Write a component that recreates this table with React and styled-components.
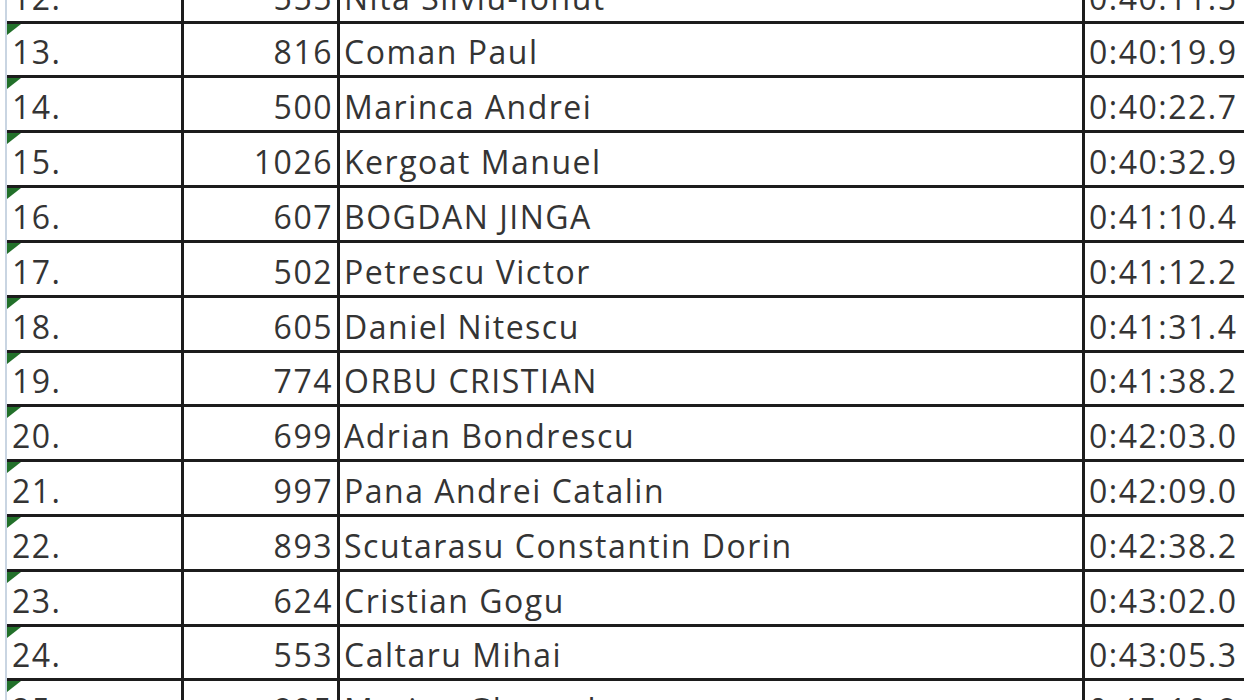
import React from "react";
import styled, { createGlobalStyle } from "styled-components";

const Global = createGlobalStyle`
  html, body { margin: 0; padding: 0; background: #fff; }
  body { width: 1244px; height: 700px; overflow: hidden; }
`;

const Sheet = styled.div`
  width: 1244px;
  height: 700px;
  overflow: hidden;
  background: #fff;
  font-family: "Open Sans", "Liberation Sans", sans-serif;
  color: #343434;
`;

const Gutter = styled.div`
  margin-left: 5px;
  border-left: 2px solid #c9d5e2;
  margin-top: -31.3px;
`;

const Row = styled.div`
  display: grid;
  grid-template-columns: 177px 156px 745px 1fr;
  height: 54.83px;
  box-sizing: border-box;
  border-bottom: 3px solid #1c1c1c;
`;

const Cell = styled.div`
  position: relative;
  box-sizing: border-box;
  display: flex;
  align-items: flex-end;
  justify-content: ${(p) => (p.$right ? "flex-end" : "flex-start")};
  padding: 0 ${(p) => (p.$right ? "4px" : "0")} 7px ${(p) => p.$pl || "4px"};
  border-right: ${(p) => (p.$last ? "none" : "3px solid #1c1c1c")};
  font-size: 32px;
  letter-spacing: 1.5px;
  line-height: 1;
  white-space: nowrap;
`;

const Flag = styled.span`
  position: absolute;
  top: 0;
  left: 0;
  width: 0;
  height: 0;
  border-top: 11px solid #22702a;
  border-right: 14px solid transparent;
`;

const rows = [
  ["12.", "555", "Nita Silviu-Ionut", "0:40:11.5"],
  ["13.", "816", "Coman Paul", "0:40:19.9"],
  ["14.", "500", "Marinca Andrei", "0:40:22.7"],
  ["15.", "1026", "Kergoat Manuel", "0:40:32.9"],
  ["16.", "607", "BOGDAN JINGA", "0:41:10.4"],
  ["17.", "502", "Petrescu Victor", "0:41:12.2"],
  ["18.", "605", "Daniel Nitescu", "0:41:31.4"],
  ["19.", "774", "ORBU CRISTIAN", "0:41:38.2"],
  ["20.", "699", "Adrian Bondrescu", "0:42:03.0"],
  ["21.", "997", "Pana Andrei Catalin", "0:42:09.0"],
  ["22.", "893", "Scutarasu Constantin Dorin", "0:42:38.2"],
  ["23.", "624", "Cristian Gogu", "0:43:02.0"],
  ["24.", "553", "Caltaru Mihai", "0:43:05.3"],
  ["25.", "895", "Marian Gheorghe", "0:45:10.8"],
];

export default function App() {
  return (
    <Sheet>
      <Global />
      <Gutter>
        {rows.map(([pos, bib, name, time]) => (
          <Row key={pos}>
            <Cell $pl="5px">
              <Flag />
              {pos}
            </Cell>
            <Cell $right>{bib}</Cell>
            <Cell $pl="4px">{name}</Cell>
            <Cell $pl="4px" $last>{time}</Cell>
          </Row>
        ))}
      </Gutter>
    </Sheet>
  );
}
